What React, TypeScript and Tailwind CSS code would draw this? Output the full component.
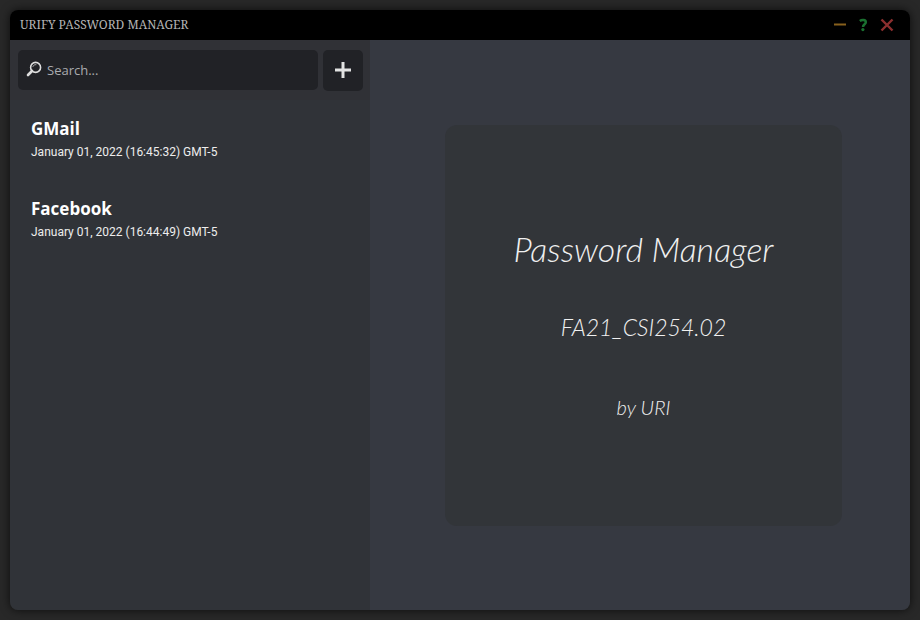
import React from "react";

type Entry = { name: string; date: string };

const entries: Entry[] = [
  { name: "GMail", date: "January 01, 2022 (16:45:32) GMT-5" },
  { name: "Facebook", date: "January 01, 2022 (16:44:49) GMT-5" },
];

function TitleBar() {
  return (
    <header className="flex h-[30px] shrink-0 items-center justify-between bg-black pl-[10px] pr-[15px]">
      <h1 className="font-['Noto_Serif','Liberation_Serif',serif] text-[12px] leading-4 text-[#b4b4b4]">
        URIFY PASSWORD MANAGER
      </h1>
      <div className="flex items-center gap-2">
        <button type="button" aria-label="Minimize" className="flex size-4 items-center justify-center">
          <svg width="16" height="16" viewBox="0 0 16 16" aria-hidden="true">
            <path d="M3 7.5h12" stroke="#87601c" strokeWidth="2" />
          </svg>
        </button>
        <button type="button" aria-label="Help" className="flex size-4 items-center justify-center">
          <svg width="16" height="16" viewBox="0 0 16 16" aria-hidden="true" fill="none">
            <path
              d="M4.8 4C6.8 2.6 10.8 2.6 10.8 5.2C10.8 7.4 8 7 8 10"
              stroke="#1a7030"
              strokeWidth="2.5"
            />
            <circle cx="7.9" cy="12.6" r="1.6" fill="#1a7030" />
          </svg>
        </button>
        <button type="button" aria-label="Close" className="flex size-4 items-center justify-center">
          <svg width="16" height="16" viewBox="0 0 16 16" aria-hidden="true">
            <path d="M2.5 2.5l11 11M13.5 2.5l-11 11" stroke="#8c2f2f" strokeWidth="2.4" />
          </svg>
        </button>
      </div>
    </header>
  );
}

function SearchRow() {
  return (
    <div className="flex h-[60px] shrink-0 items-start gap-[5px] bg-[#303136] pl-2 pr-[7px] pt-[10px]">
      <div className="flex h-10 min-w-0 flex-1 items-center gap-[5px] rounded-[5px] bg-[#212226] pl-2">
        <svg width="16" height="16" viewBox="0 0 16 16" fill="none" aria-hidden="true" className="mb-0.5 shrink-0">
          <circle cx="9.6" cy="6.4" r="5" stroke="#dddddd" strokeWidth="1.6" />
          <path d="M6.8 5.8C7.4 4.1 8.8 3.5 10.3 3.7" stroke="#b5b5b5" strokeWidth="1" />
          <path d="M6 10L2 14" stroke="#dddddd" strokeWidth="2.6" strokeLinecap="round" />
        </svg>
        <input
          type="text"
          aria-label="Search"
          placeholder="Search..."
          className="min-w-0 flex-1 bg-transparent pt-0.5 font-['Open_Sans','Noto_Sans',sans-serif] text-[13px] text-white outline-none placeholder:text-[#a9abae]"
        />
      </div>
      <button
        type="button"
        aria-label="Add password"
        className="flex h-[41px] w-10 items-center justify-center rounded-[5px] bg-[#212226] pb-px"
      >
        <svg width="16" height="16" viewBox="0 0 16 16" aria-hidden="true">
          <path d="M8 0v16M0 8h16" stroke="#e3e3e3" strokeWidth="3" />
        </svg>
      </button>
    </div>
  );
}

function EntryList() {
  return (
    <ul className="min-h-0 flex-1 overflow-hidden">
      {entries.map((entry) => (
        <li key={entry.name} className="h-20 px-[21px] pt-[17px]">
          <h2 className="font-['Open_Sans','Noto_Sans',sans-serif] text-[17px] font-bold leading-6 text-white">
            {entry.name}
          </h2>
          <p className="font-['Roboto',sans-serif] text-[12px] leading-[22px] text-[#ededed]">{entry.date}</p>
        </li>
      ))}
    </ul>
  );
}

function Welcome() {
  return (
    <main className="flex min-w-0 flex-1 items-center justify-center bg-[#363941] pl-[7px]">
      <section className="flex h-[401px] w-[397px] flex-col items-center rounded-[12px] bg-[#323539] pt-[96px] font-['Lato',sans-serif] font-light italic text-[#f0f0f0]">
        <h2 className="text-[34px] leading-[56px]">Password Manager</h2>
        <p className="mt-[34px] text-[23px] leading-8">FA21_CSI254.02</p>
        <p className="mt-12 text-[20px] leading-8">by URI</p>
      </section>
    </main>
  );
}

export default function App() {
  return (
    <div className="h-screen bg-[#282828] p-[10px]">
      <div className="flex h-full flex-col overflow-hidden rounded-[8px] shadow-[0_0_10px_rgba(0,0,0,0.7)]">
        <TitleBar />
        <div className="flex min-h-0 flex-1">
          <aside className="flex w-[360px] shrink-0 flex-col bg-[#303338]">
            <SearchRow />
            <EntryList />
          </aside>
          <Welcome />
        </div>
      </div>
    </div>
  );
}
